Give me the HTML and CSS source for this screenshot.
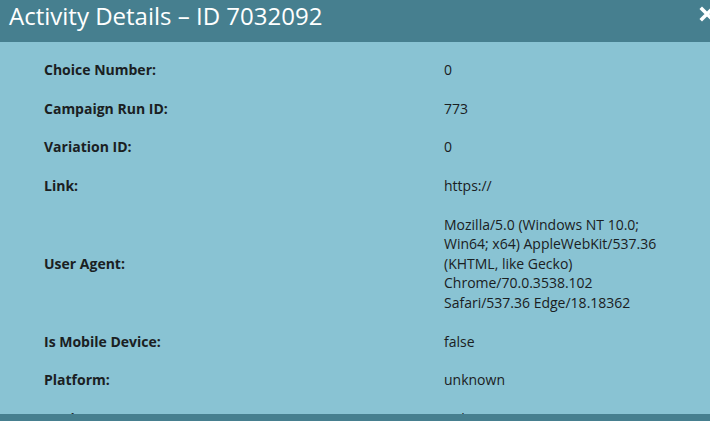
FILE: index.html
```html
<!DOCTYPE html>
<html lang="en">
<head>
    <meta charset="UTF-8">
    <title>Activity Details</title>
    <link rel="stylesheet" href="styles.css">
</head>
<body>
    <div class="dialog">
        <div class="dialog-header">
            <h1 class="dialog-title">Activity Details – ID 7032092</h1>
            <svg class="dialog-close" width="16" height="16" viewBox="0 0 16 16">
                <path d="M3 3 L13 13 M13 3 L3 13" stroke="#fff" stroke-width="3.6" stroke-linecap="square"/>
            </svg>
        </div>
        <div class="dialog-body">
            <div class="detail-row">
                <div class="detail-label">Choice Number:</div>
                <div class="detail-value">0</div>
            </div>
            <div class="detail-row">
                <div class="detail-label">Campaign Run ID:</div>
                <div class="detail-value">773</div>
            </div>
            <div class="detail-row">
                <div class="detail-label">Variation ID:</div>
                <div class="detail-value">0</div>
            </div>
            <div class="detail-row">
                <div class="detail-label">Link:</div>
                <div class="detail-value">https://</div>
            </div>
            <div class="detail-row">
                <div class="detail-label">User Agent:</div>
                <div class="detail-value">Mozilla/5.0 (Windows NT 10.0; Win64; x64) AppleWebKit/537.36 (KHTML, like Gecko) Chrome/70.0.3538.102 Safari/537.36 Edge/18.18362</div>
            </div>
            <div class="detail-row">
                <div class="detail-label">Is Mobile Device:</div>
                <div class="detail-value">false</div>
            </div>
            <div class="detail-row">
                <div class="detail-label">Platform:</div>
                <div class="detail-value">unknown</div>
            </div>
            <div class="detail-row">
                <div class="detail-label">Device:</div>
                <div class="detail-value">unknown</div>
            </div>
        </div>
        <div class="dialog-footer"></div>
    </div>
</body>
</html>
```

FILE: styles.css
```css
body {
    margin: 0;
    font-family: "Open Sans", Arial, sans-serif;
    background-color: #89c3d3;
    overflow: hidden;
}

.dialog {
    width: 710px;
    height: 421px;
    display: flex;
    flex-direction: column;
}

.dialog-header {
    height: 42px;
    background-color: #467f8f;
    display: flex;
    align-items: center;
    justify-content: space-between;
    padding-left: 9px;
    overflow: hidden;
    flex-shrink: 0;
}

.dialog-title {
    margin: -10px 0 0 0;
    font-size: 24px;
    font-weight: normal;
    color: #fff;
    line-height: 32px;
}

.dialog-close {
    flex-shrink: 0;
    margin-right: -5px;
    margin-top: -14px;
}

.dialog-body {
    flex: 1;
    overflow: hidden;
    padding-top: 8.5px;
    background-color: #89c3d3;
}

.detail-row {
    display: flex;
    align-items: center;
    padding: 9.6px 0 9.6px 44px;
    font-size: 14px;
    line-height: 19.5px;
    color: #1a2022;
}

.detail-label {
    width: 400px;
    font-weight: bold;
}

.detail-value {
    width: 220px;
}

.dialog-footer {
    height: 7px;
    background-color: #467f8f;
    flex-shrink: 0;
}
```
